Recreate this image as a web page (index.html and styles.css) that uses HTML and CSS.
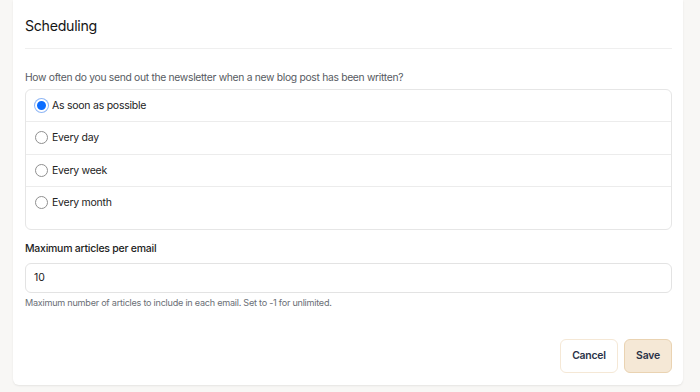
FILE: index.html
```html
<html>
    <head>
        <title>Scheduling</title>
        <link rel="stylesheet" href="styles.css">
    </head>
    <body>
        <div class="card">
            <h2 class="title">Scheduling</h2>
            <p class="question">How often do you send out the newsletter when a new blog post has been written?</p>
            <div class="options">
                <label class="option"><span class="radio checked"></span>As soon as possible</label>
                <label class="option"><span class="radio"></span>Every day</label>
                <label class="option"><span class="radio"></span>Every week</label>
                <label class="option"><span class="radio"></span>Every month</label>
            </div>
            <p class="field-label">Maximum articles per email</p>
            <div class="input">10</div>
            <p class="help">Maximum number of articles to include in each email. Set to -1 for unlimited.</p>
            <div class="actions">
                <span class="btn cancel">Cancel</span>
                <span class="btn save">Save</span>
            </div>
        </div>
    </body>
</html>
```

FILE: styles.css
```css
body {
    margin: 0;
    background: #f8f7f5;
    font-family: Inter, "Noto Sans", sans-serif;
    color: #1d1d1f;
}
.card {
    margin: 0 17px 0 13px;
    padding: 0 11px 12px 12px;
    background: #fff;
    border-radius: 0 0 6px 6px;
    box-shadow: 0 1px 2px rgba(0, 0, 0, 0.08);
}
.title {
    margin: 0;
    padding: 16px 0 12px 0;
    font-size: 14.2px;
    font-weight: 400;
    letter-spacing: -0.3px;
    line-height: 20px;
    color: #151515;
    border-bottom: 1px solid #efefef;
}
.question {
    margin: 20px 0 4px 0;
    font-size: 10.3px;
    letter-spacing: -0.3px;
    line-height: 16px;
    color: #575b62;
}
.options {
    border: 1px solid #e6e6e6;
    border-radius: 6px;
    padding-bottom: 11px;
}
.option {
    display: flex;
    align-items: center;
    height: 31.33px;
    padding-left: 9px;
    font-size: 10.5px;
    letter-spacing: -0.25px;
    color: #222;
}
.option + .option {
    border-top: 1px solid #ececec;
}
.radio {
    width: 11px;
    height: 11px;
    border: 1px solid #8f8f8f;
    border-radius: 50%;
    margin-right: 4px;
    box-sizing: content-box;
}
.radio.checked {
    width: 9px;
    height: 9px;
    border: 2px solid #fff;
    background: #0b6cff;
    box-shadow: 0 0 0 1px #8fb6f5;
}
.field-label {
    margin: 11px 0 6px 0;
    font-size: 10.5px;
    font-weight: 500;
    letter-spacing: -0.25px;
    line-height: 16px;
    color: #222;
}
.input {
    height: 28px;
    line-height: 28px;
    padding-left: 8px;
    border: 1px solid #e3e3e3;
    border-radius: 6px;
    font-size: 10.5px;
    color: #222;
}
.help {
    margin: 3px 0 0 0;
    font-size: 9.1px;
    letter-spacing: -0.25px;
    line-height: 14px;
    color: #6b6f76;
}
.actions {
    display: flex;
    justify-content: flex-end;
    gap: 6px;
    margin-top: 29px;
}
.btn {
    height: 32px;
    line-height: 32px;
    border-radius: 6px;
    font-size: 10.4px;
    font-weight: 600;
    letter-spacing: -0.2px;
    color: #2a3247;
    text-align: center;
}
.cancel {
    width: 56px;
    border: 1px solid #f5e8d6;
    background: #fff;
}
.save {
    width: 46px;
    border: 1px solid #ead3b2;
    background: #f5e8d6;
}
```
